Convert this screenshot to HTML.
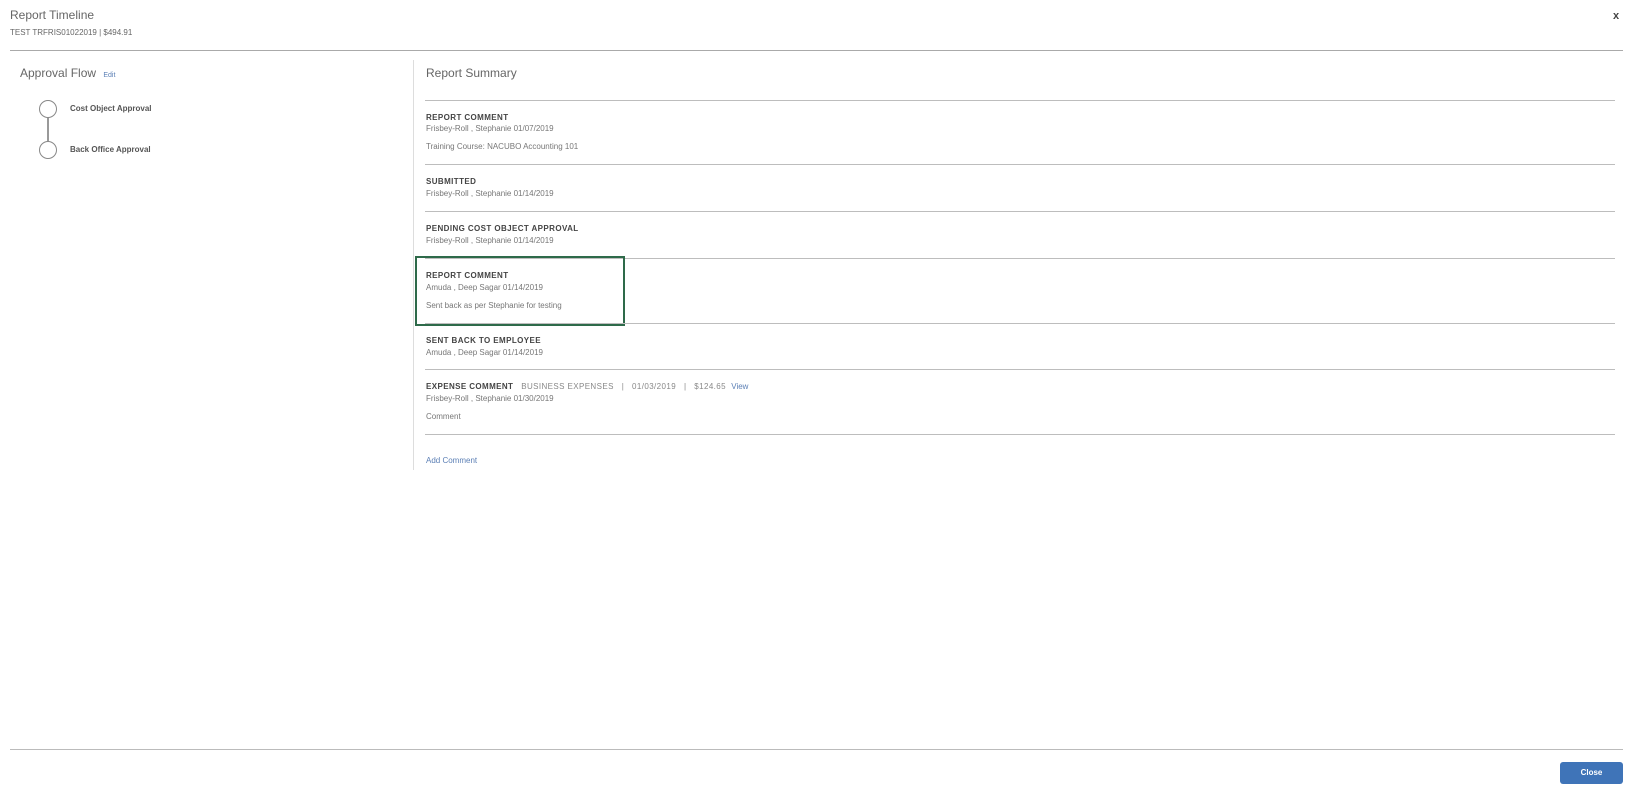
<!DOCTYPE html>
<html><head><meta charset="utf-8"><style>
*{margin:0;padding:0;box-sizing:border-box}
body{width:1631px;height:791px;background:#fff;font-family:"Liberation Sans",sans-serif;color:#555;position:relative;overflow:hidden}
.a{position:absolute;white-space:nowrap}
.hl{position:absolute;height:1px;background:#bdbdbd}
.t{font-size:8px;font-weight:bold;color:#444;letter-spacing:.4px}
.s{font-size:8px;color:#777}
.lk{color:#5b7fb5}
</style></head><body>
<div class="a" style="left:10px;top:8px;font-size:12px;color:#666">Report Timeline</div>
<div class="a" style="left:10px;top:28px;font-size:8px;color:#666">TEST TRFRIS01022019 | $494.91</div>
<div class="a" style="left:1613px;top:10px;font-size:11px;font-weight:bold;color:#444">x</div>
<div class="hl" style="left:10px;top:50px;width:1613px;background:#aaa"></div>

<div class="a" style="left:20px;top:66px;font-size:12px;color:#666">Approval Flow <span class="lk" style="font-size:7px;margin-left:4px">Edit</span></div>
<div class="a" style="left:39px;top:100px;width:18px;height:18px;border:1.5px solid #888;border-radius:50%"></div>
<div class="a" style="left:47px;top:118px;width:1.5px;height:23px;background:#999"></div>
<div class="a" style="left:39px;top:141px;width:18px;height:18px;border:1.5px solid #888;border-radius:50%"></div>
<div class="a" style="left:70px;top:104px;font-size:8px;font-weight:bold;color:#555">Cost Object Approval</div>
<div class="a" style="left:70px;top:145px;font-size:8px;font-weight:bold;color:#555">Back Office Approval</div>

<div class="a" style="left:413px;top:60px;width:1px;height:410px;background:#ddd"></div>
<div class="a" style="left:426px;top:66px;font-size:12px;color:#666">Report Summary</div>
<div class="hl" style="left:425px;top:100px;width:1190px"></div>

<div class="a t" style="left:426px;top:113px">REPORT COMMENT</div>
<div class="a s" style="left:426px;top:124px">Frisbey-Roll , Stephanie 01/07/2019</div>
<div class="a s" style="left:426px;top:142px">Training Course: NACUBO Accounting 101</div>
<div class="hl" style="left:425px;top:164px;width:1190px"></div>

<div class="a t" style="left:426px;top:177px">SUBMITTED</div>
<div class="a s" style="left:426px;top:189px">Frisbey-Roll , Stephanie 01/14/2019</div>
<div class="hl" style="left:425px;top:211px;width:1190px"></div>

<div class="a t" style="left:426px;top:224px">PENDING COST OBJECT APPROVAL</div>
<div class="a s" style="left:426px;top:236px">Frisbey-Roll , Stephanie 01/14/2019</div>
<div class="hl" style="left:425px;top:258px;width:1190px"></div>

<div class="a" style="left:415px;top:256px;width:210px;height:70px;border:2.5px solid #2e6a4a"></div>
<div class="a t" style="left:426px;top:271px">REPORT COMMENT</div>
<div class="a s" style="left:426px;top:283px">Amuda , Deep Sagar 01/14/2019</div>
<div class="a s" style="left:426px;top:301px">Sent back as per Stephanie for testing</div>
<div class="hl" style="left:425px;top:323px;width:1190px"></div>

<div class="a t" style="left:426px;top:336px">SENT BACK TO EMPLOYEE</div>
<div class="a s" style="left:426px;top:348px">Amuda , Deep Sagar 01/14/2019</div>
<div class="hl" style="left:425px;top:369px;width:1190px"></div>

<div class="a" style="left:426px;top:382px;font-size:8px;color:#888;letter-spacing:.4px"><span class="t">EXPENSE COMMENT</span> &nbsp; BUSINESS EXPENSES &nbsp; | &nbsp; 01/03/2019 &nbsp; | &nbsp; $124.65 &nbsp;<span class="lk" style="letter-spacing:0">View</span></div>
<div class="a s" style="left:426px;top:394px">Frisbey-Roll , Stephanie 01/30/2019</div>
<div class="a s" style="left:426px;top:412px">Comment</div>
<div class="hl" style="left:425px;top:434px;width:1190px"></div>

<div class="a lk" style="left:426px;top:456px;font-size:8px">Add Comment</div>

<div class="hl" style="left:10px;top:749px;width:1613px;background:#bbb"></div>
<div class="a" style="left:1560px;top:762px;width:63px;height:22px;background:#3f74b8;border-radius:3px;color:#fff;font-size:8px;font-weight:bold;text-align:center;line-height:22px">Close</div>
</body></html>
